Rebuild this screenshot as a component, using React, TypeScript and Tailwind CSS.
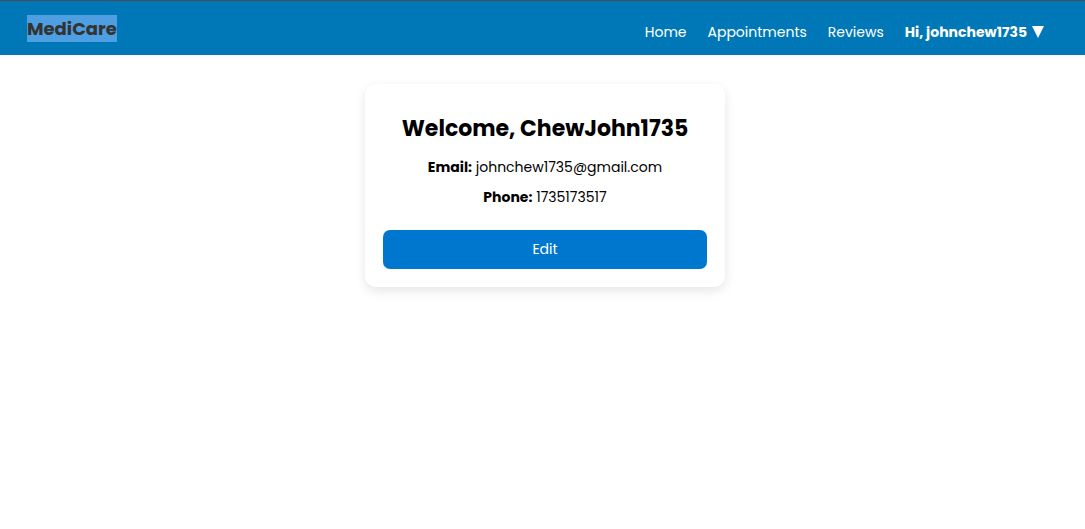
const links = ["Home", "Appointments", "Reviews"];

function Header() {
  return (
    <header className="flex h-[55px] items-center justify-between border-t border-[#4a4a55] bg-[#0078b7] pr-[41px] pl-[27px]">
      <a href="#home" className="bg-[#4d9fe2] text-lg leading-[27px] font-bold text-[#333333]">
        MediCare
      </a>
      <nav className="flex items-center gap-[21px] pt-2 text-sm leading-[22px] text-white">
        {links.map((label) => (
          <a key={label} href={`#${label.toLowerCase()}`}>
            {label}
          </a>
        ))}
        <button type="button" className="flex items-center gap-[5px] font-bold">
          Hi, johnchew1735
          <svg viewBox="0 0 12 12" className="size-3" fill="currentColor" aria-hidden="true">
            <path d="M0 0H12L6 12Z" />
          </svg>
        </button>
      </nav>
    </header>
  );
}

function ProfileCard() {
  return (
    <section className="w-full max-w-[360px] rounded-[11px] bg-white p-[18px] text-center shadow-[0_4px_11px_rgba(0,0,0,0.1)]">
      <h1 className="mt-[9px] text-[22px] leading-9 font-bold">Welcome, ChewJohn1735</h1>
      <div className="mt-[9px] flex flex-col gap-2 text-sm leading-[22px]">
        <p>
          <strong className="font-bold">Email:</strong> johnchew1735@gmail.com
        </p>
        <p>
          <strong className="font-bold">Phone:</strong> 1735173517
        </p>
      </div>
      <button
        type="button"
        className="mt-[22px] w-full rounded-[7px] bg-[#0077cf] pt-2 pb-[9px] text-sm leading-[22px] text-white"
      >
        Edit
      </button>
    </section>
  );
}

export default function App() {
  return (
    <div className="min-h-screen bg-white font-[Poppins,Inter,sans-serif] text-black">
      <Header />
      <main className="flex justify-center pt-[29px] pl-[5px]">
        <ProfileCard />
      </main>
    </div>
  );
}
